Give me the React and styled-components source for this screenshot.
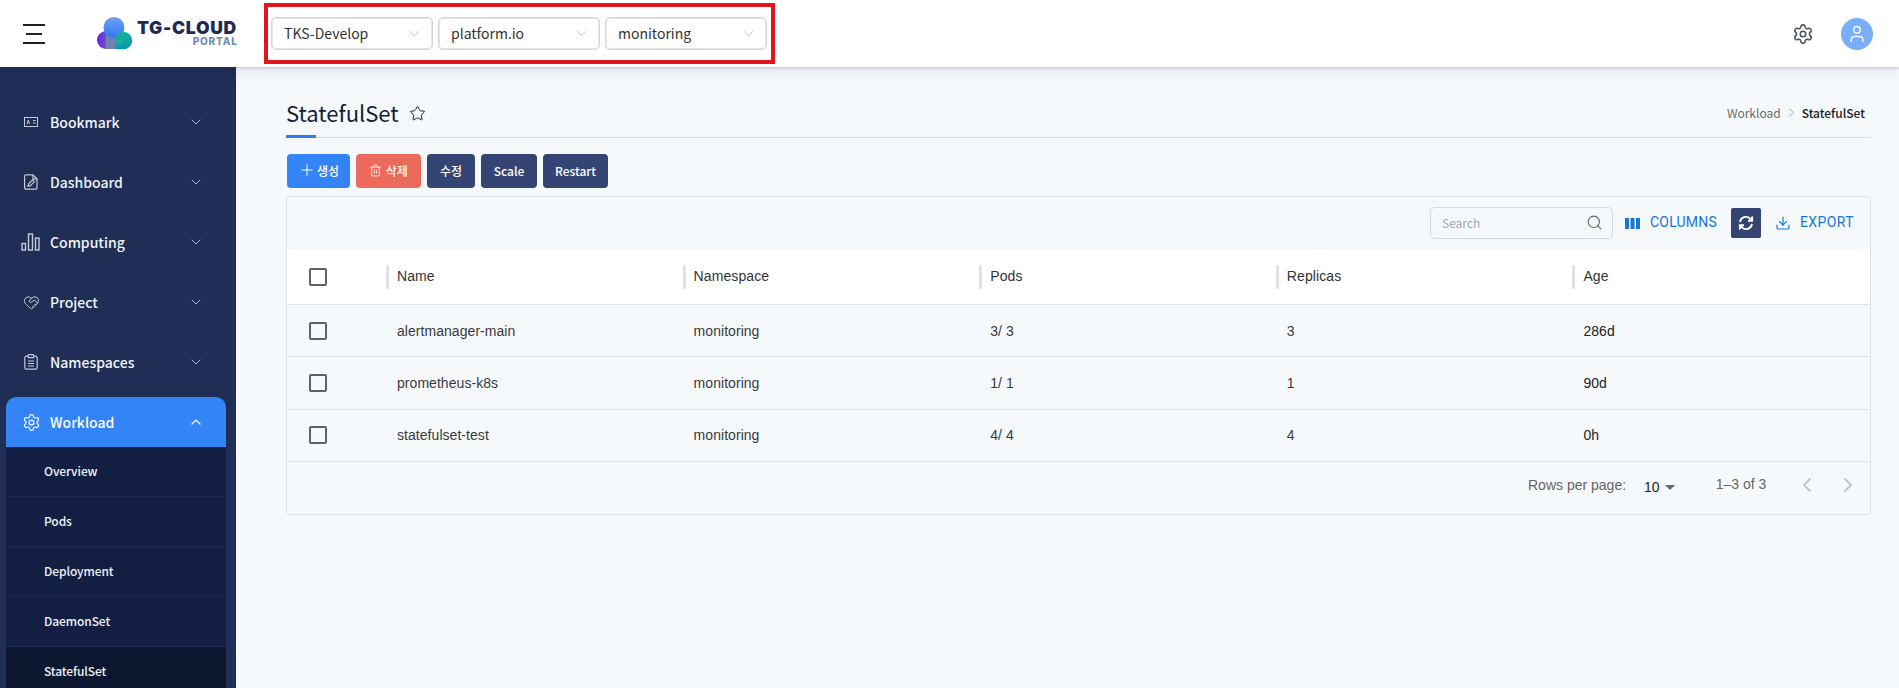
import React from "react";
import styled, { createGlobalStyle } from "styled-components";
import { ChevronDown, ChevronUp, ChevronLeft, ChevronRight, HeartHandshake, Settings, User, Search, Trash2, Plus, Download, Star } from "lucide-react";

const Global = createGlobalStyle`
  html, body { margin: 0; padding: 0; height: 100%; overflow: hidden; background: #f6f9fc; }
  * { box-sizing: border-box; }
  body { font-family: "Noto Sans CJK KR", "Noto Sans", sans-serif; color: #1a2340; }
`;
const Page = styled.div`width: 1899px; height: 688px; display: flex; flex-direction: column; overflow: hidden;`;
const Header = styled.header`
  height: 67px; flex: none; background: #fff; display: flex; align-items: center; position: relative; z-index: 2;
  box-shadow: 0 1px 3px rgba(30, 40, 70, .2), 0 2px 18px rgba(30, 40, 70, .12);
`;
const Burger = styled.div`
  width: 22px; margin-left: 23px; height: 20px; display: flex; flex-direction: column; justify-content: space-between;
  span { display: block; height: 2px; background: #222; }
  span:nth-child(2) { width: 16px; margin-left: 3px; }
`;
const Logo = styled.div`margin-left: 52px; width: 140px; height: 34px; display: flex; gap: 4px; align-items: center;`;
const LogoText = styled.div`display: flex; flex-direction: column; align-items: flex-end; margin-top: -2px;`;
const LogoMain = styled.div`font: 900 17.5px/17px Inter, sans-serif; color: #1d2a56; letter-spacing: .7px; white-space: nowrap;`;
const LogoSub = styled.div`font: 800 10px/11px Inter, sans-serif; color: #6f8fb3; letter-spacing: .8px; margin-right: -.8px;`;
const SelectBox = styled.div`
  margin-left: 27px; width: 511px; height: 61px; border: 4px solid #e3141c; display: flex; align-items: center; padding-left: 3px; gap: 5px;
`;
const Select = styled.div`
  width: 162px; height: 33px; border: 1px solid #d5d5d5; box-shadow: 0 0 0 1px #e6e6e6 inset; border-radius: 5px; display: flex; align-items: center; justify-content: space-between;
  padding: 0 9px 2px 12px; font: 400 14px "Noto Sans CJK KR", sans-serif; color: #333; svg { color: #aaa; margin-top: 1px; }
`;
const HeaderRight = styled.div`margin-left: auto; display: flex; align-items: center; gap: 27px; padding-right: 26px; svg { display: block; }`;
const Avatar = styled.div`width: 32px; height: 32px; border-radius: 50%; background: #78aefc; display: flex; align-items: center; justify-content: center;`;
const Body = styled.div`flex: 1; display: flex; min-height: 0;`;
const Sidebar = styled.aside`width: 236px; flex: none; background: #1f2e55; padding-top: 25px; overflow: hidden;`;
const NavItem = styled.div`
  height: 60px; display: flex; align-items: center; color: #f0f3f9; font: 500 14px "Noto Sans CJK KR", sans-serif;
`;
const NavIcon = styled.span`width: 50px; flex: none; display: flex; justify-content: center; padding-left: 12px; color: #c3cad8;`;
const NavLabel = styled.span`flex: 1;`;
const NavChevron = styled.span`width: 48px; display: flex; color: ${p => (p.$open ? "#fff" : "#a8b1c4")};`;
const Active = styled.div`margin: 5px 10px 0 6px; border-radius: 10px 10px 0 0; overflow: hidden; background: #121f42;`;
const ActiveHead = styled.div`
  height: 50px; background: #3384f7; display: flex; align-items: center; color: #fff; font: 500 14px "Noto Sans CJK KR", sans-serif;
  ${NavChevron} { width: 38px; }
`;
const ActiveIcon = styled.span`width: 44px; display: flex; justify-content: center; padding-left: 6px;`;
const SubItem = styled.div`
  height: 50px; padding: 0 0 2px 38px; display: flex; align-items: center; color: #eef1f7; font: 500 12px "Noto Sans CJK KR", sans-serif; letter-spacing: -.1px;
  border-bottom: 1px solid #1c2a4f; background: ${p => (p.$active ? "#0d1730" : "transparent")};
`;
const Main = styled.main`flex: 1; padding: 25px 28px 0 50px; min-width: 0;`;
const TitleRow = styled.div`height: 46px; padding: 0 6px 5px 0; border-bottom: 1px solid #d9dde5; display: flex; align-items: center; justify-content: space-between; position: relative;`;
const Underline = styled.span`position: absolute; left: 0; bottom: -1px; width: 30px; height: 3px; background: #2f80ed;`;
const Title = styled.h1`margin: 0; font: 400 22px "Noto Sans CJK KR", sans-serif; color: #141c36; display: flex; align-items: center; gap: 10px; svg { margin-top: 2px; }`;
const Crumbs = styled.div`display: flex; align-items: center; gap: 3px; font: 500 12px "Noto Sans CJK KR", sans-serif; color: #222; svg { margin-top: 1px; }`;
const CrumbLink = styled.span`color: #6b6b6b; font-weight: 400;`;
const Actions = styled.div`display: flex; gap: 6px; margin: 16px 0 8px 1px;`;
const Btn = styled.button`
  width: ${p => p.$w}px; height: 34px; border: 0; border-radius: 4px; background: ${p => p.$bg || "#344574"}; color: #fff; padding: 0 0 2px;
  font: 500 12px "Noto Sans CJK KR", sans-serif; display: flex; align-items: center; justify-content: center; gap: 1px;
`;
const Card = styled.section`width: 1585px; border: 1px solid #dfe3e9; border-radius: 4px; height: 319px;`;
const Toolbar = styled.div`height: 52px; display: flex; align-items: center; padding-left: 1143px;`;
const SearchBox = styled.div`
  width: 183px; height: 32px; border: 1px solid #d5d9e0; border-radius: 5px; display: flex; align-items: center; justify-content: space-between; padding: 0 9px 1px 11px;
  font: 400 12px "Noto Sans CJK KR", sans-serif; color: #a3a8b0; svg { color: #666; }
`;
const ToolLink = styled.div`
  display: flex; align-items: center; color: #1976d2; font: 400 14px/1 Roboto, sans-serif; letter-spacing: ${p => p.$ls}px; gap: ${p => p.$gap}px; margin-top: -2px;
  margin-left: ${p => p.$ml}px; svg { display: block; margin-top: 2px; }
`;
const Refresh = styled.div`margin-left: 14px; width: 30px; height: 30px; background: #344574; border-radius: 2px; display: flex; align-items: center; justify-content: center;`;
const Row = styled.div`
  display: grid; grid-template-columns: 99px repeat(5, 296.6px); height: ${p => p.$h}px; align-items: center; border-bottom: 1px solid #dfe3e9;
  background: ${p => (p.$head ? "#fff" : "transparent")};
`;
const Check = styled.span`display: block; width: 18px; height: 18px; border: 2px solid #616161; border-radius: 2px; margin-left: 22px;`;
const HeadCell = styled.div`
  height: 24px; padding: 0 0 2px 8px; border-left: 3px solid #e2e2e2; display: flex; align-items: center; font: 400 14px "Liberation Sans", Arial, sans-serif; letter-spacing: .1px; color: #333;
`;
const Cell = styled.div`padding-left: 11px; font: 400 14px "Liberation Sans", Arial, sans-serif; letter-spacing: .05px; color: ${p => (p.$age ? "#222" : "#3a3a3a")};`;
const Footer = styled.div`height: 51px; padding: 0 0 4px 1241px; display: flex; align-items: center; font: 400 14px "Liberation Sans", Arial, sans-serif; color: #666;`;
const PerPage = styled.span`margin-left: 18px; color: #222; display: flex; align-items: center; gap: 3px; margin-top: 4px;`;
const Caret = styled.span`width: 0; height: 0; border: 5px solid transparent; border-top-color: #666; border-bottom: 0; margin-left: 2px;`;
const Range = styled.span`margin-left: 41px; margin-top: -2px;`;
const PageNav = styled.div`margin-left: 29px; display: flex; gap: 17px; color: #c4c4c4; svg { display: block; }`;

const BookmarkIcon = () => (
  <svg width="14" height="14" viewBox="0 0 14 14" fill="none" stroke="currentColor"><rect x=".5" y="2.5" width="13" height="9" /><path d="M3 9l1.3-4L5.6 9M9 5.5h2.6M9 8h2.6" /></svg>
);
const FileIcon = () => (
  <svg width="14" height="16" viewBox="0 0 14 16" fill="none" stroke="currentColor" strokeWidth="1.2"><path d="M2 .8h7l4 4v9a1.4 1.4 0 0 1-1.4 1.4H2A1.4 1.4 0 0 1 .6 13.8V2.2A1.4 1.4 0 0 1 2 .8z" /><path d="M9 .8v4h4" /><path d="M4 12.2l.6-2.4 4-4 1.8 1.8-4 4z" /></svg>
);
const ClipIcon = () => (
  <svg width="14" height="16" viewBox="0 0 14 16" fill="none" stroke="currentColor" strokeWidth="1.2"><rect x=".8" y="2.2" width="12.4" height="13" rx="1.8" /><rect x="4.2" y=".7" width="5.6" height="3" rx=".8" fill="#1f2e55" /><path d="M4 7h6M4 9.5h6M4 12h6" /></svg>
);
const BarsIcon = () => (
  <svg width="20" height="18" viewBox="0 0 20 18" fill="none" stroke="currentColor" strokeWidth="1.4"><rect x="1" y="10.5" width="3.5" height="6.5" /><rect x="7.5" y="1" width="4" height="16" /><rect x="14.5" y="5" width="3.5" height="12" /></svg>
);
const ColumnsIcon = () => (
  <svg width="15" height="11" viewBox="0 0 15 11" fill="#1976d2"><rect width="4" height="11" /><rect x="5.5" width="4" height="11" /><rect x="11" width="4" height="11" /></svg>
);
const SyncIcon = () => (
  <svg width="16" height="16" viewBox="0 0 16 16" fill="none" stroke="#fff" strokeWidth="1.8"><path d="M2 7a6 6 0 0 1 10.3-3.2L14 5.5" /><path d="M14.2 1.5v4.3H10" fill="#fff" /><path d="M14 9a6 6 0 0 1-10.3 3.2L2 10.5" /><path d="M1.8 14.5v-4.3H6" fill="#fff" /></svg>
);
const LogoMark = () => (
  <svg width="36" height="33" viewBox="0 0 36 33">
    <defs>
      <linearGradient id="a" x1="0" y1="0" x2="0" y2="1"><stop offset="0" stopColor="#6f9ff6" /><stop offset="1" stopColor="#2f7bf0" /></linearGradient>
      <linearGradient id="b" x1="0" y1="0" x2="1" y2="0"><stop offset="0" stopColor="#6a22ea" /><stop offset="1" stopColor="#6d7fb0" /></linearGradient>
      <linearGradient id="c" x1="0" y1="0" x2="0" y2="1"><stop offset="0" stopColor="#1ab2a2" /><stop offset="1" stopColor="#0c98a8" /></linearGradient>
    </defs>
    <circle cx="9" cy="23" r="9" fill="url(#b)" />
    <rect x="9" y="18" width="10" height="14" fill="#7180b6" />
    <circle cx="17" cy="10.5" r="10.5" fill="url(#a)" />
    <circle cx="26.5" cy="23.5" r="8.7" fill="url(#c)" />
    <path d="M18 23h8v9.2h-8z" fill="url(#c)" />
  </svg>
);

const nav = [
  ["Bookmark", <BookmarkIcon />],
  ["Dashboard", <FileIcon />],
  ["Computing", <BarsIcon />],
  ["Project", <HeartHandshake size={17} strokeWidth={1.4} />],
  ["Namespaces", <ClipIcon />],
];
const rows = [
  ["alertmanager-main", "monitoring", "3/ 3", "3", "286d"],
  ["prometheus-k8s", "monitoring", "1/ 1", "1", "90d"],
  ["statefulset-test", "monitoring", "4/ 4", "4", "0h"],
];

export default function App() {
  return (
    <Page>
      <Global />
      <Header>
        <Burger><span /><span /><span /></Burger>
        <Logo>
          <LogoMark />
          <LogoText><LogoMain>TG-CLOUD</LogoMain><LogoSub>PORTAL</LogoSub></LogoText>
        </Logo>
        <SelectBox>
          {["TKS-Develop", "platform.io", "monitoring"].map(s => (
            <Select key={s}>{s}<ChevronDown size={17} strokeWidth={1} /></Select>
          ))}
        </SelectBox>
        <HeaderRight>
          <Settings size={22} strokeWidth={1.7} color="#4b5563" />
          <Avatar><User size={20} strokeWidth={1.7} color="#fff" /></Avatar>
        </HeaderRight>
      </Header>
      <Body>
        <Sidebar>
          {nav.map(([label, icon]) => (
            <NavItem key={label}>
              <NavIcon>{icon}</NavIcon>
              <NavLabel>{label}</NavLabel>
              <NavChevron><ChevronDown size={16} strokeWidth={1.5} /></NavChevron>
            </NavItem>
          ))}
          <Active>
            <ActiveHead>
              <ActiveIcon><Settings size={19} strokeWidth={1.5} /></ActiveIcon>
              <NavLabel>Workload</NavLabel>
              <NavChevron $open><ChevronUp size={16} strokeWidth={1.8} /></NavChevron>
            </ActiveHead>
            {["Overview", "Pods", "Deployment", "DaemonSet"].map(s => <SubItem key={s}>{s}</SubItem>)}
            <SubItem $active>StatefulSet</SubItem>
          </Active>
        </Sidebar>
        <Main>
          <TitleRow>
            <Title>StatefulSet <Star size={17} strokeWidth={1.4} color="#222" /></Title>
            <Crumbs><CrumbLink>Workload</CrumbLink><ChevronRight size={15} strokeWidth={1} color="#777" />StatefulSet</Crumbs>
            <Underline />
          </TitleRow>
          <Actions>
            <Btn $w={63} $bg="#3384f7"><Plus size={18} strokeWidth={1.3} />생성</Btn>
            <Btn $w={65} $bg="#ec6a5c"><Trash2 size={13} strokeWidth={1.5} />&nbsp;삭제</Btn>
            <Btn $w={48}>수정</Btn>
            <Btn $w={56}>Scale</Btn>
            <Btn $w={65}>Restart</Btn>
          </Actions>
          <Card>
            <Toolbar>
              <SearchBox>Search<Search size={17} strokeWidth={1.5} /></SearchBox>
              <ToolLink $ml={12} $ls={0.2} $gap={10}><ColumnsIcon />COLUMNS</ToolLink>
              <Refresh><SyncIcon /></Refresh>
              <ToolLink $ml={14} $ls={0.4} $gap={9}><Download size={16} strokeWidth={1.8} />EXPORT</ToolLink>
            </Toolbar>
            <Row $head $h={56}>
              <Check />
              {["Name", "Namespace", "Pods", "Replicas", "Age"].map(h => <HeadCell key={h}>{h}</HeadCell>)}
            </Row>
            {rows.map(r => (
              <Row key={r[0]} $h={52.33}>
                <Check />
                {r.map((c, i) => <Cell key={i} $age={i === 4}>{c}</Cell>)}
              </Row>
            ))}
            <Footer>
              Rows per page:
              <PerPage>10<Caret /></PerPage>
              <Range>1–3 of 3</Range>
              <PageNav><ChevronLeft size={24} strokeWidth={1.8} /><ChevronRight size={24} strokeWidth={1.8} /></PageNav>
            </Footer>
          </Card>
        </Main>
      </Body>
    </Page>
  );
}
